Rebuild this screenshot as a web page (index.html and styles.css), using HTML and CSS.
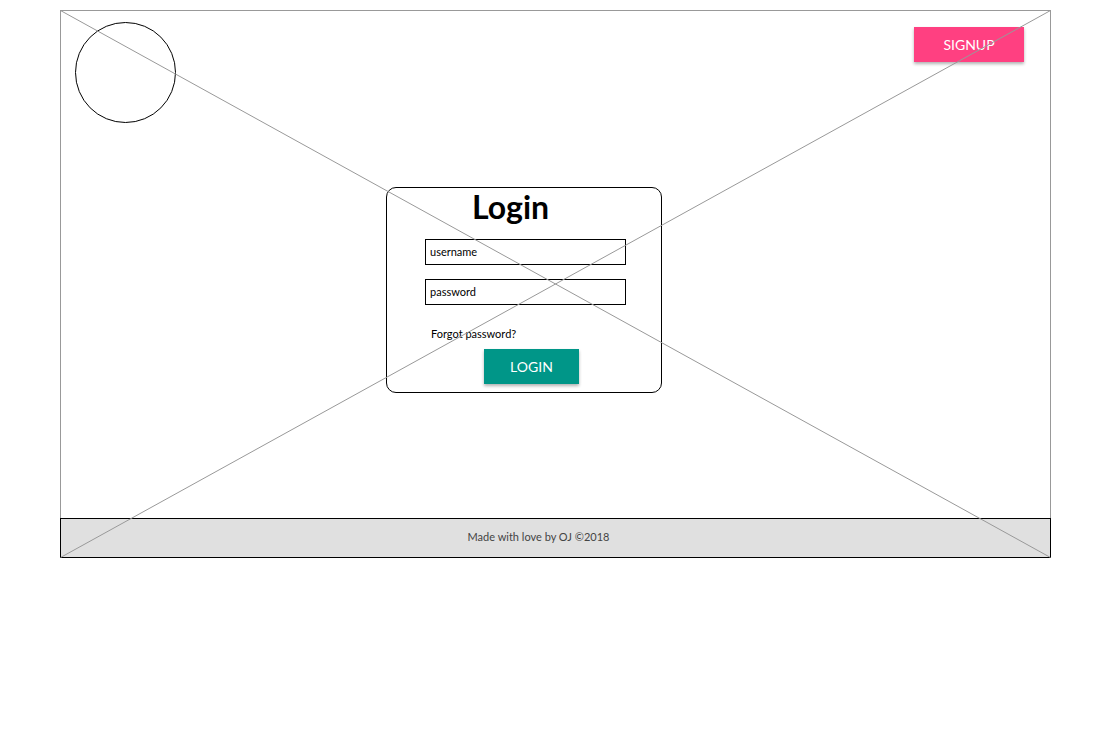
FILE: index.html
```html
<!DOCTYPE html>
<html>
<head>
<meta charset="utf-8">
<title>Login</title>
<link rel="stylesheet" href="styles.css">
</head>
<body>
<div class="page">
  <div class="hero">
    <header class="top">
      <div class="logo"></div>
      <button class="btn btn-signup">SIGNUP</button>
    </header>
    <div class="card">
      <h1 class="card-title">Login</h1>
      <input class="field" type="text" value="username">
      <input class="field field-second" type="text" value="password">
      <a class="forgot">Forgot password?</a>
      <button class="btn btn-login">LOGIN</button>
    </div>
  </div>
  <footer class="footer">Made with love by OJ ©2018</footer>
  <svg class="cross" width="991" height="548" viewBox="0 0 991 548">
    <line x1="0.5" y1="0.5" x2="990.5" y2="547.5"/>
    <line x1="990.5" y1="0.5" x2="0.5" y2="547.5"/>
  </svg>
</div>
</body>
</html>
```
FILE: styles.css
```css
* { box-sizing: border-box; }
body {
  margin: 0;
  background: #fff;
  font-family: "Lato", "Open Sans", sans-serif;
  color: #000;
}
.page {
  position: relative;
  width: 991px;
  margin: 10px 0 0 60px;
}
.hero {
  height: 508px;
  border: 1px solid #999;
  border-bottom: none;
  padding: 0 26px 0 0;
}
.top {
  display: flex;
  justify-content: space-between;
  align-items: flex-start;
  padding: 11px 0 0 14px;
}
.logo {
  width: 101px;
  height: 101px;
  border: 1px solid #000;
  border-radius: 50%;
}
.btn {
  border: none;
  color: #fff;
  font-family: "Lato", "Open Sans", sans-serif;
  font-size: 14px;
  box-shadow: 0 2px 3px rgba(0,0,0,0.3);
  padding: 0;
}
.btn-signup {
  margin-top: 5px;
  width: 110px;
  height: 35px;
  background: #ff4081;
}
.card {
  margin: 64px 0 0 325px;
  width: 276px;
  height: 206px;
  border: 1px solid #000;
  border-radius: 10px;
  display: flex;
  flex-direction: column;
  align-items: flex-start;
}
.card-title {
  margin: 0 0 0 85px;
  font-size: 32px;
  line-height: 37px;
  font-weight: 700;
}
.field {
  margin: 14px 0 0 38px;
  width: 201px;
  height: 26px;
  border: 1px solid #000;
  padding: 0 4px 1px;
  font-family: "Lato", "Open Sans", sans-serif;
  font-size: 11px;
  color: #000;
  background: #fff;
  outline: none;
}
.field-second {
  margin-top: 14px;
}
.forgot {
  margin: 22px 0 0 44px;
  font-size: 11px;
  line-height: 14px;
  color: #000;
}
.btn-login {
  margin: 8px 0 0 97px;
  width: 95px;
  height: 35px;
  background: #009688;
}
.footer {
  height: 40px;
  border: 1px solid #000;
  background: #e0e0e0;
  display: flex;
  align-items: center;
  justify-content: center;
  padding: 0 34px 3px 0;
  font-size: 11px;
  color: #444;
}
.cross {
  position: absolute;
  left: 0;
  top: 0;
  pointer-events: none;
}
.cross line {
  stroke: #999;
  stroke-width: 1;
}
```
